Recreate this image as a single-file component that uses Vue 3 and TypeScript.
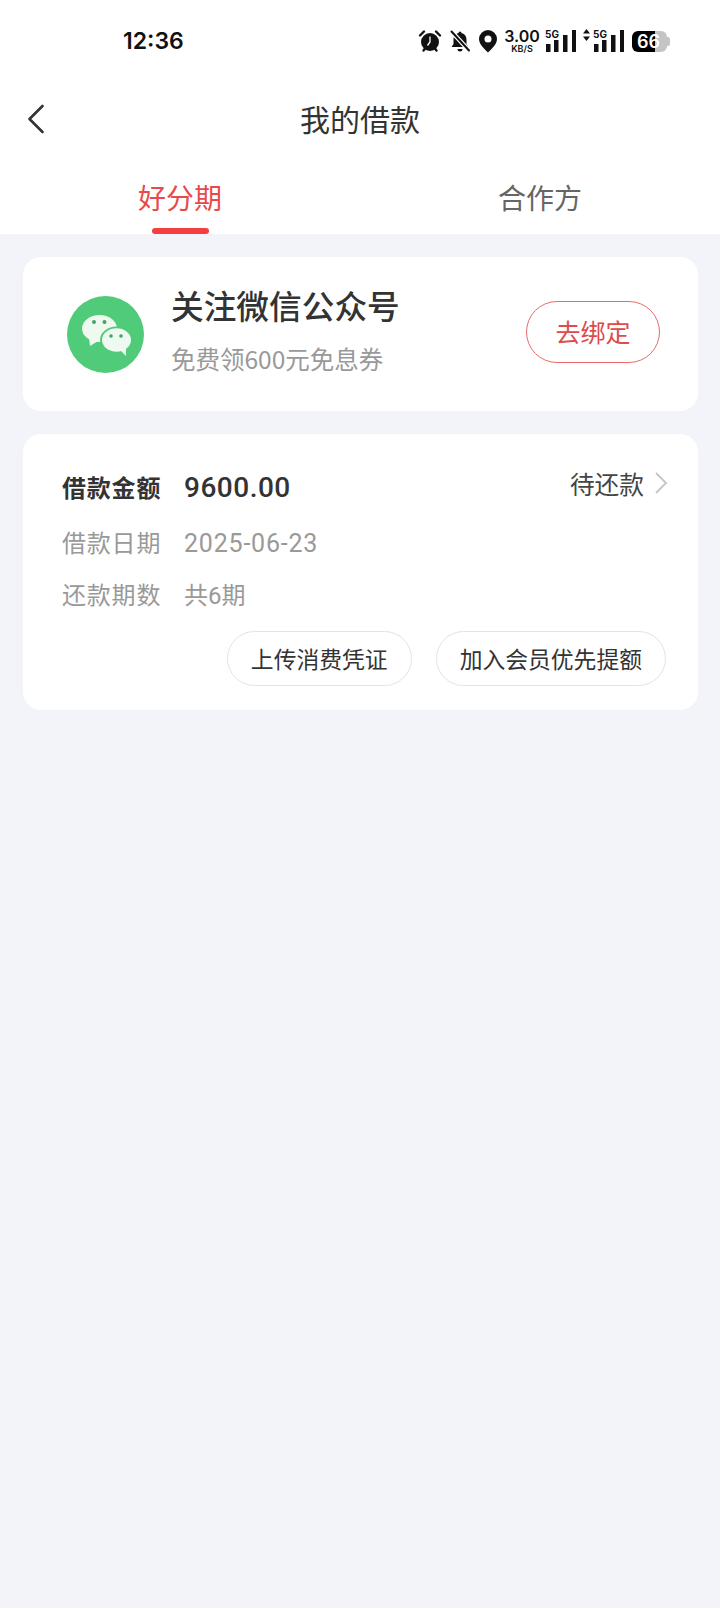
<script setup lang="ts">
interface Row {
  label: string;
  value: string;
  spaced?: boolean;
}

const rows: Row[] = [
  { label: '借款日期', value: '2025-06-23', spaced: true },
  { label: '还款期数', value: '共6期' }
];

const actions: string[] = ['上传消费凭证', '加入会员优先提额'];
</script>

<template>
  <div class="page">
    <div class="status">
      <span class="status__time">12:36</span>
      <div class="status__icons">
        <svg class="ic ic--alarm" width="24" height="24" viewBox="0 0 24 24">
          <circle cx="12" cy="13" r="9" fill="#111" />
          <path d="M2 6.500 6 2.500M22 6.500 18 2.500M5.500 21.500l2-2.500M18.500 21.500l-2-2.500" stroke="#111" stroke-width="2.400" stroke-linecap="round" fill="none" />
          <path d="M12 7.500V13l-2.500 3.500" stroke="#fff" stroke-width="1.300" fill="none" />
        </svg>
        <svg class="ic ic--bell" width="22" height="24" viewBox="0 0 22 24">
          <path d="M11 2.500a1.500 1.500 0 0 1 1.500 1.500c3.500.8 5 3.500 5 7v4l2 3H2.500l2-3v-4c0-3.500 1.500-6.200 5-7A1.500 1.500 0 0 1 11 2.500ZM8.500 20h5a2.500 2.500 0 0 1-5 0Z" fill="#111" />
          <path d="M2.500 2.500 20 21.500" stroke="#fff" stroke-width="4.500" />
          <path d="M2.500 2.500 20 21.500" stroke="#111" stroke-width="2" stroke-linecap="round" />
        </svg>
        <svg class="ic ic--pin" width="18" height="24" viewBox="0 0 18 24">
          <path fill-rule="evenodd" d="M9 1a9 9 0 0 1 9 9c0 5-5 9.500-9 13.500C5 19.500 0 15 0 10a9 9 0 0 1 9-9Zm0 5.500a3.500 3.500 0 1 0 0 7 3.500 3.500 0 0 0 0-7Z" fill="#111" />
        </svg>
        <div class="speed">
          <span class="speed__num">3.00</span>
          <span class="speed__unit">KB/S</span>
        </div>
        <div class="net net--first">
          <span class="net__g">5G</span>
          <svg width="30" height="24" viewBox="0 0 30 24">
            <path d="M0 15h4.500v8H0zM8 11h4.500v12H8zM17 6h4.500v17H17zM26 1h4v22h-4z" fill="#111" />
          </svg>
        </div>
        <div class="net">
          <svg width="7" height="12" viewBox="0 0 7 12">
            <path d="M3.500 0 7 4.500H0zM3.500 12 0 7.500h7z" fill="#111" />
          </svg>
          <span class="net__g">5G</span>
          <svg width="30" height="24" viewBox="0 0 30 24">
            <path d="M0 15h4.500v8H0zM8 11h4.500v12H8zM17 6h4.500v17H17zM26 1h4v22h-4z" fill="#111" />
          </svg>
        </div>
        <div class="battery">
          <span class="battery__fill">66</span>
          <span class="battery__cap"></span>
        </div>
      </div>
    </div>

    <header class="nav">
      <svg class="nav__back" width="18" height="30" viewBox="0 0 18 30">
        <path d="M15.500 2 2.500 15l13 13" fill="none" stroke="#333" stroke-width="2.600" stroke-linecap="round" stroke-linejoin="round" />
      </svg>
      <h1 class="nav__title">我的借款</h1>
    </header>

    <div class="tabs">
      <div class="tab tab--active">好分期</div>
      <div class="tab">合作方</div>
    </div>

    <main class="content">
      <section class="card promo">
        <svg class="promo__logo" width="77" height="77" viewBox="0 0 77 77">
          <circle cx="38.500" cy="38.500" r="38.500" fill="#4fcb7a" />
          <ellipse cx="32.500" cy="32.500" rx="17.500" ry="13.500" fill="#eefaef" />
          <path d="M22 42l1 8 8-5z" fill="#eefaef" />
          <ellipse cx="49.500" cy="44" rx="16.500" ry="13.500" fill="#4fcb7a" />
          <ellipse cx="49.500" cy="44" rx="14.500" ry="11.700" fill="#eefaef" />
          <path d="M53 54l6 6 0-9z" fill="#eefaef" />
          <circle cx="27" cy="26" r="2" fill="#3aa862" />
          <circle cx="37.500" cy="26" r="2" fill="#3aa862" />
          <circle cx="44" cy="40" r="1.800" fill="#3aa862" />
          <circle cx="54" cy="40" r="1.800" fill="#3aa862" />
        </svg>
        <div class="promo__text">
          <div class="promo__title">关注微信公众号</div>
          <div class="promo__sub">免费领600元免息券</div>
        </div>
        <button class="promo__btn" type="button">去绑定</button>
      </section>

      <section class="card loan">
        <div class="loan__head">
          <span class="loan__label loan__label--strong">借款金额</span>
          <span class="loan__amount">9600.00</span>
          <span class="loan__status">待还款</span>
          <svg class="loan__chevron" width="14" height="24" viewBox="0 0 14 24">
            <path d="M2 2l10 10L2 22" fill="none" stroke="#c4c4c4" stroke-width="1.800" />
          </svg>
        </div>
        <div v-for="row in rows" :key="row.label" class="loan__row">
          <span class="loan__label">{{ row.label }}</span>
          <span class="loan__value" :class="{ 'loan__value--spaced': row.spaced }">{{ row.value }}</span>
        </div>
        <div class="loan__actions">
          <button v-for="a in actions" :key="a" class="loan__btn" type="button">{{ a }}</button>
        </div>
      </section>
    </main>
  </div>
</template>

<style>
html,
body {
  margin: 0;
  background: #f2f4f9;
}
</style>

<style scoped>
.page {
  width: 720px;
  min-height: 1608px;
  background: #f2f4f9;
  font-family: "Noto Sans CJK SC", "Noto Sans", sans-serif;
  color: #333;
}

.status {
  height: 80px;
  background: #fff;
  display: flex;
  align-items: center;
  padding: 2px 53px 0 123px;
  box-sizing: border-box;
  justify-content: space-between;
}

.status__time {
  font-family: Inter, sans-serif;
  font-size: 23px;
  font-weight: 600;
  color: #111;
}

.status__icons {
  display: flex;
  align-items: center;
}

.ic {
  display: block;
}

.ic--alarm {
  margin-right: 7px;
}

.ic--bell {
  margin-right: 8px;
}

.ic--pin {
  margin-right: 7px;
}

.speed {
  width: 36px;
  margin-right: 5px;
  display: flex;
  flex-direction: column;
  align-items: center;
  font-family: Inter, sans-serif;
  color: #111;
  line-height: 1;
}

.speed__num {
  font-size: 16px;
  font-weight: 600;
  line-height: 15px;
}

.speed__unit {
  font-size: 9px;
  font-weight: 600;
  line-height: 10px;
}

.net {
  position: relative;
  display: flex;
  align-items: flex-start;
  height: 24px;
  margin-left: 7px;
  gap: 4px;
}

.net--first {
  margin-left: 0;
  padding-left: 1px;
}

.net__g {
  position: absolute;
  left: 0;
  top: 0;
  font-family: Inter, sans-serif;
  font-size: 10px;
  font-weight: 700;
  line-height: 11px;
  color: #111;
}

.net:not(.net--first) .net__g {
  left: 10px;
}

.battery {
  display: flex;
  align-items: center;
  width: 35px;
  height: 21px;
  margin-left: 8px;
  border-radius: 6px;
  background: linear-gradient(to right, #000 0 66%, #c4c4c4 66% 100%);
  position: relative;
}

.battery__fill {
  padding-left: 5px;
  font-family: Inter, sans-serif;
  font-size: 18px;
  font-weight: 600;
  color: #fff;
  line-height: 21px;
}

.battery__cap {
  position: absolute;
  right: -3px;
  top: 6px;
  width: 3px;
  height: 9px;
  border-radius: 0 2px 2px 0;
  background: #c4c4c4;
}

.nav {
  position: relative;
  height: 78px;
  padding-bottom: 2px;
  box-sizing: border-box;
  background: #fff;
  display: flex;
  align-items: center;
  justify-content: center;
}

.nav__back {
  position: absolute;
  left: 27px;
  top: 24px;
}

.nav__title {
  margin: 0;
  font-size: 30px;
  font-weight: 400;
  color: #333;
}

.tabs {
  display: flex;
  height: 76px;
  background: #fff;
}

.tab {
  flex: 1;
  position: relative;
  text-align: center;
  font-size: 28px;
  line-height: 78px;
  color: #666;
}

.tab--active {
  color: #e84a4a;
}

.tab--active::after {
  content: "";
  position: absolute;
  left: 152px;
  bottom: 0;
  width: 57px;
  height: 6px;
  border-radius: 3px;
  background: #f43f3f;
}

.content {
  padding: 23px 22px 0 23px;
  display: flex;
  flex-direction: column;
  gap: 22px;
}

.card {
  background: #fff;
  border-radius: 18px;
}

.promo {
  display: flex;
  align-items: center;
  height: 154px;
  padding: 0 38px 0 44px;
  box-sizing: border-box;
}

.promo__logo {
  flex: none;
  margin-right: 27px;
}

.promo__text {
  flex: 1;
  margin-bottom: 9px;
}

.promo__title {
  font-size: 32.700px;
  font-weight: 500;
  line-height: 46px;
  color: #333;
}

.promo__sub {
  margin-top: 13px;
  font-size: 24.500px;
  line-height: 36px;
  color: #999;
}

.promo__btn {
  width: 134px;
  height: 62px;
  margin-bottom: 4px;
  padding: 0 0 3px;
  border: 1px solid #e86a6a;
  border-radius: 31px;
  background: #fff;
  font: inherit;
  font-size: 25px;
  color: #e04a4a;
}

.loan {
  height: 276px;
  margin-top: 1px;
  padding: 29px 32px 0 39px;
  box-sizing: border-box;
}

.loan__head {
  display: flex;
  align-items: baseline;
  height: 48px;
}

.loan__label {
  width: 122px;
  flex: none;
  font-size: 24px;
  line-height: 48px;
  letter-spacing: 0.800px;
  color: #999;
}

.loan__label--strong {
  font-weight: 700;
  color: #333;
}

.loan__amount {
  flex: 1;
  font-family: Roboto, sans-serif;
  font-size: 28px;
  font-weight: 500;
  line-height: 48px;
  letter-spacing: 0.500px;
  color: #333;
}

.loan__status {
  align-self: flex-start;
  font-size: 24.700px;
  line-height: 40px;
  color: #444;
}

.loan__chevron {
  align-self: flex-start;
  margin: 8px -2px 0 10px;
}

.loan__row {
  display: flex;
  align-items: baseline;
  height: 48px;
  margin-top: 7px;
}

.loan__row + .loan__row {
  margin-top: 4px;
}

.loan__value {
  font-family: Roboto, "Noto Sans CJK SC", sans-serif;
  font-size: 24px;
  line-height: 48px;
  color: #999;
}

.loan__value--spaced {
  font-size: 25px;
  letter-spacing: 0.800px;
}

.loan__actions {
  display: flex;
  justify-content: flex-end;
  gap: 24px;
  margin-top: 13px;
}

.loan__btn {
  height: 55px;
  padding: 0 23px;
  border: 1px solid #e3e3e3;
  border-radius: 28px;
  background: #fff;
  font: inherit;
  font-size: 22.800px;
  color: #333;
}
</style>
